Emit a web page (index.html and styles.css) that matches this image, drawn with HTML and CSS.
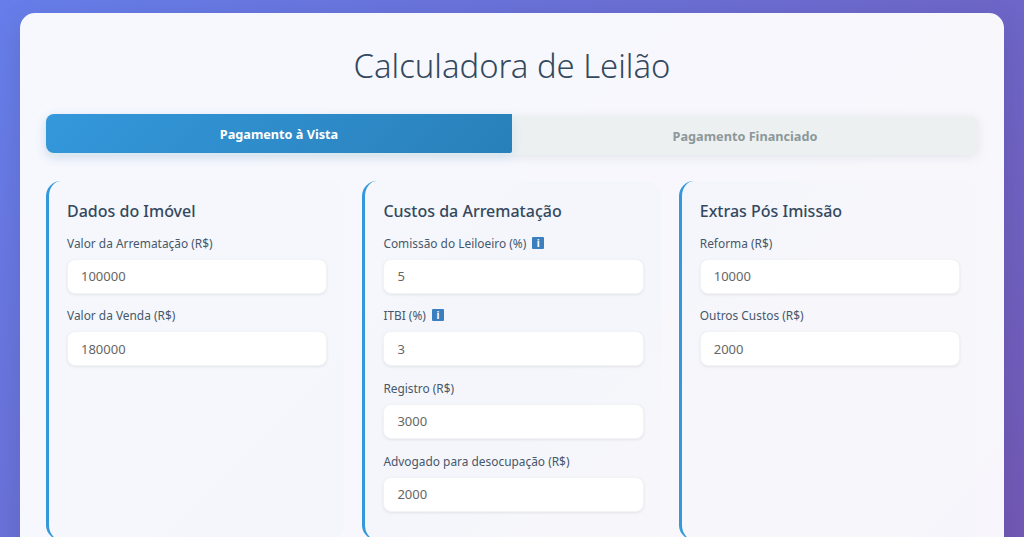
FILE: index.html
```html
<!DOCTYPE html>
<html lang="pt-BR">
<head>
<meta charset="utf-8">
<title>Calculadora de Leilão</title>
<link rel="stylesheet" href="styles.css">
</head>
<body>
<main class="container">
  <h1 class="title">Calculadora de Leilão</h1>
  <div class="tabs">
    <button class="tab tab-active" type="button">Pagamento à Vista</button>
    <button class="tab" type="button">Pagamento Financiado</button>
  </div>
  <div class="grid">
    <section class="card">
      <h2 class="card-title">Dados do Imóvel</h2>
      <div class="field">
        <label class="label">Valor da Arrematação (R$)</label>
        <input class="input" value="100000">
      </div>
      <div class="field">
        <label class="label">Valor da Venda (R$)</label>
        <input class="input" value="180000">
      </div>
    </section>
    <section class="card">
      <h2 class="card-title">Custos da Arrematação</h2>
      <div class="field">
        <label class="label">Comissão do Leiloeiro (%) <span class="info">i</span></label>
        <input class="input" value="5">
      </div>
      <div class="field">
        <label class="label">ITBI (%) <span class="info">i</span></label>
        <input class="input" value="3">
      </div>
      <div class="field">
        <label class="label">Registro (R$)</label>
        <input class="input" value="3000">
      </div>
      <div class="field">
        <label class="label">Advogado para desocupação (R$)</label>
        <input class="input" value="2000">
      </div>
    </section>
    <section class="card">
      <h2 class="card-title">Extras Pós Imissão</h2>
      <div class="field">
        <label class="label">Reforma (R$)</label>
        <input class="input" value="10000">
      </div>
      <div class="field">
        <label class="label">Outros Custos (R$)</label>
        <input class="input" value="2000">
      </div>
    </section>
  </div>
</main>
</body>
</html>
```
FILE: styles.css
```css
* { box-sizing: border-box; }
html, body { height: 100%; }
body {
  margin: 0;
  padding: 13px 20px 0;
  overflow: hidden;
  background: linear-gradient(135deg, #667eea 0%, #764ba2 100%) no-repeat;
  background-size: 100% 1130px;
  font-family: "Noto Sans", "Open Sans", sans-serif;
}
.container {
  width: 984px;
  padding: 26px 26px 40px;
  background: rgba(255, 255, 255, 0.95);
  border-radius: 15px;
  box-shadow: 0 8px 30px rgba(0, 0, 0, 0.1);
}
.title {
  margin: 0 0 26px;
  height: 51px;
  line-height: 54px;
  text-align: center;
  font-size: 32.8px;
  font-weight: 300;
  color: #34495e;
}
.tabs {
  display: flex;
  height: 39px;
  margin-bottom: 26px;
  border-radius: 8px;
  background: #ecf0f1;
  box-shadow: 0 2px 11px rgba(110, 125, 135, 0.15);
}
.tab {
  flex: 1;
  padding: 0;
  border: 0;
  background: transparent;
  font-family: inherit;
  font-size: 12.7px;
  line-height: 20px;
  font-weight: 700;
  color: #8c9899;
}
.tab-active {
  color: #fff;
  background: linear-gradient(135deg, #3498db, #2980b9);
  border-radius: 8px 0 2px 8px;
  box-shadow: 0 4px 12px rgba(52, 152, 219, 0.12);
  transform: translateY(-2px);
}
.grid {
  display: grid;
  grid-template-columns: repeat(3, 298.2px);
  gap: 18.2px;
}
.card {
  padding: 20px 17px 16px 18px;
  background: rgba(236, 240, 245, 0.15);
  border-left: 3px solid #3498db;
  border-radius: 15px;
}
.card-title {
  margin: 0 0 12.6px;
  font-size: 16px;
  line-height: 20px;
  font-weight: 500;
  color: #34495e;
}
.field { margin-bottom: 12.67px; }
.label {
  display: block;
  margin-bottom: 7px;
  font-size: 11.9px;
  line-height: 18px;
  font-weight: 400;
  color: #47576a;
}
.info {
  display: inline-block;
  width: 12px;
  height: 12px;
  margin-left: 3px;
  border-radius: 1px;
  background: #3a80c0;
  color: #fff;
  font-size: 10px;
  line-height: 12px;
  font-weight: 700;
  text-align: center;
  vertical-align: 1px;
}
.input {
  display: block;
  width: 100%;
  height: 35px;
  padding: 0 13px;
  border: 1px solid #f1f3f5;
  border-radius: 8px;
  background: #fff;
  box-shadow: 0 1px 3px rgba(0, 0, 0, 0.08);
  font-family: inherit;
  font-size: 13px;
  color: #666;
}
```
